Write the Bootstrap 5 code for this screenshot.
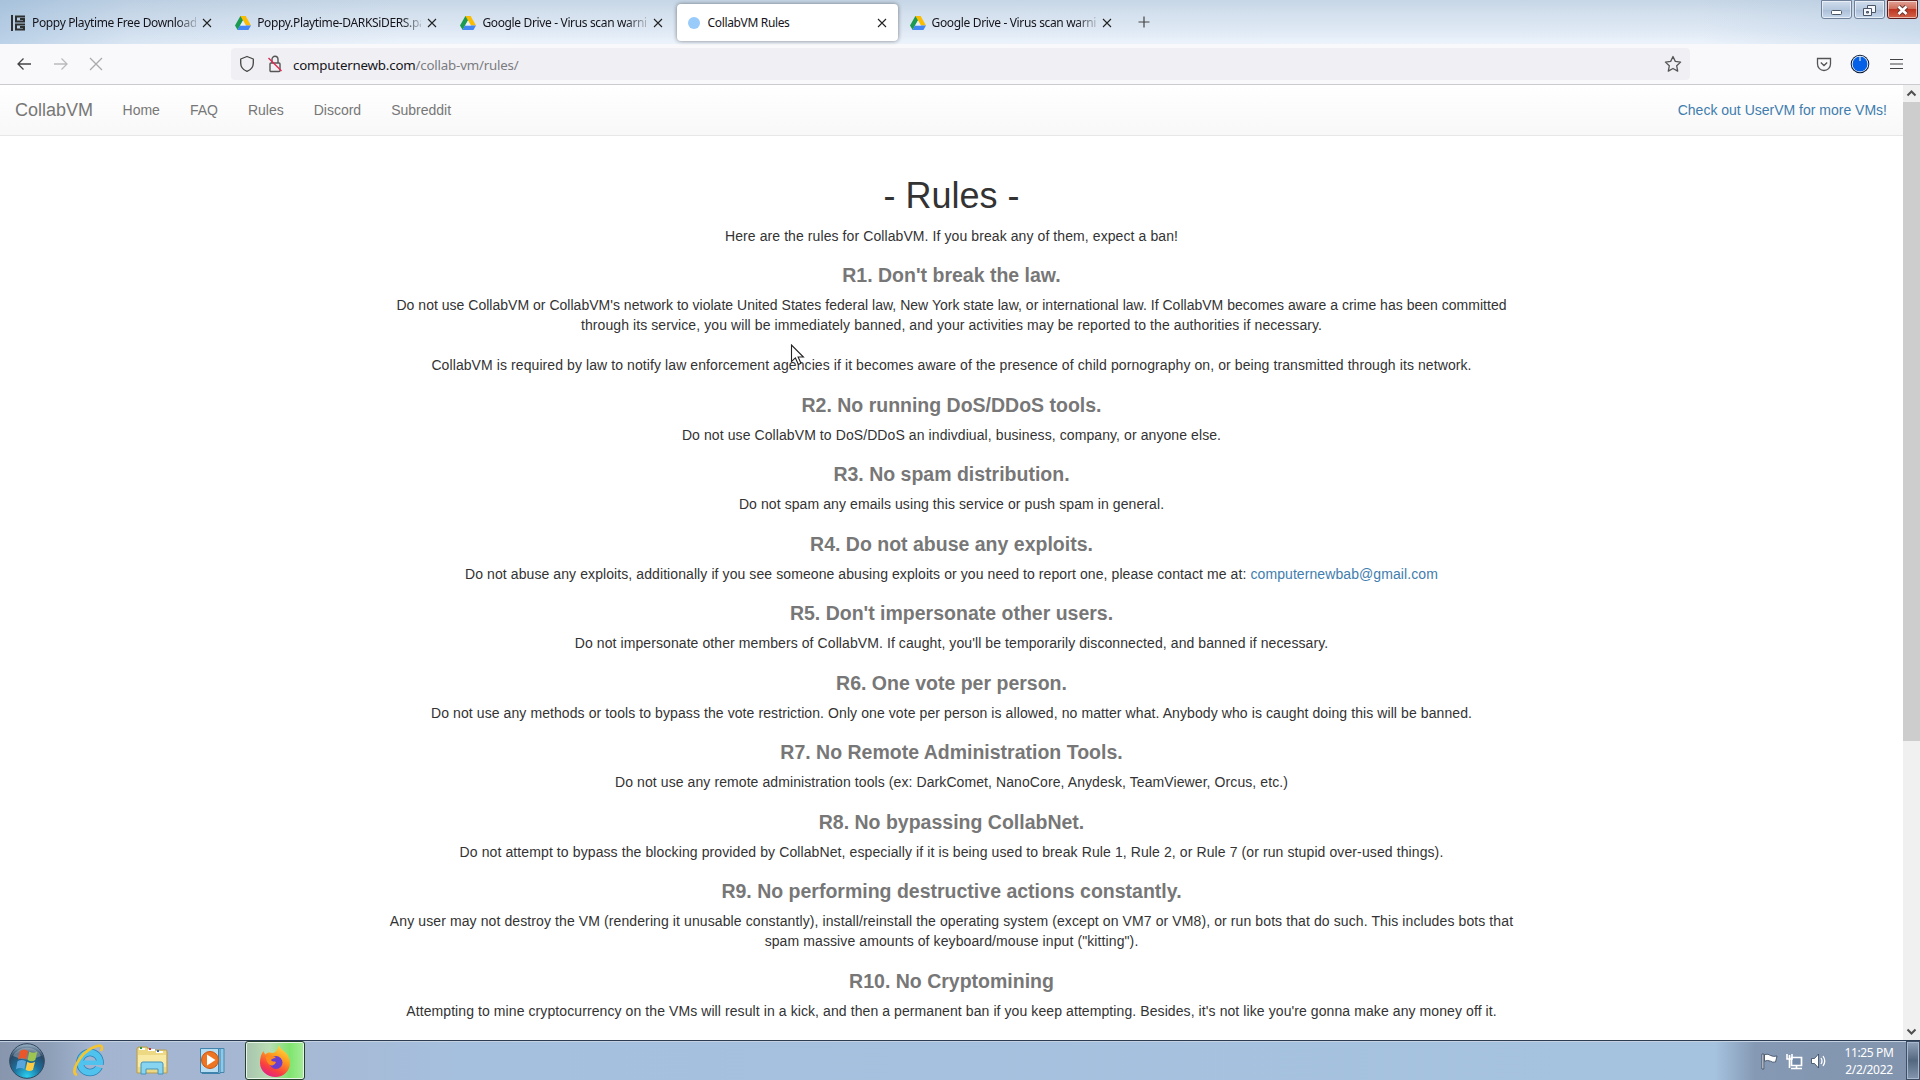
<!DOCTYPE html>
<html lang="en"><head><meta charset="utf-8"><title>CollabVM Rules</title>
<link rel="stylesheet" href="https://cdn.jsdelivr.net/npm/bootstrap@5.3.0/dist/css/bootstrap.min.css">
<script src="https://cdn.jsdelivr.net/npm/bootstrap@5.3.0/dist/js/bootstrap.bundle.min.js" defer></script>
<style>
html,body{height:1080px;overflow:hidden;background:#fff}
.desk{width:1920px;height:1080px;position:relative}
.ui{font-family:"Noto Sans","Open Sans",sans-serif}
.tabstrip{height:44px;position:relative;background:linear-gradient(90deg,#7fa8cf70,#8fb0d030 130px,transparent 400px,transparent 1700px,#8fb0d040),linear-gradient(#c6d6e6,#d5e1ee 35%,#dfe9f5 70%,#ecf3fb);font-size:12px;color:#15141a}
.btab{width:225.2px;height:44px;padding:1px 13px 0 10px;flex:none}
.ttl{width:164px;white-space:nowrap;letter-spacing:-.35px;margin-left:6px}
.fade-r{-webkit-mask-image:linear-gradient(90deg,#000 88%,#0004 99%)}
.btab.on{height:37px;width:221px;margin:4px 2px 0 1px;padding:1px 11px 0 9px;background:#fff;border-radius:4px;box-shadow:0 0 4px #0007}
.dot{width:12px;height:12px;background:#98cbfa;margin:0 2px}
.winbtns{position:absolute;right:2px;top:0}
.wb{width:31px;height:19px;border:1px solid #6f819b;border-radius:0 0 3px 3px;background:linear-gradient(#cfdcec,#b6c8de 50%,#a9bdd6 51%,#c7d8ec);box-shadow:inset 0 0 0 1px #ffffff90;margin-left:2px}
.wb.x{border-color:#5e1d1d;background:linear-gradient(#e0a296,#cf6a57 48%,#bd3520 50%,#d4634a)}
.tools{height:41px;background:#f9f9fb;border-bottom:1px solid #cacad0;padding:0 17px 0 17px}
.urlbar{margin-left:128px;width:1459px;height:32px;background:#f0f0f4;border-radius:4px;font-size:13.3px;color:#15141a;padding:0 8px 0 8px}
.url-text{letter-spacing:-.19px;padding-top:3px}
.url-text span{color:#7b7b80}
.page{font-family:"Liberation Sans",Arial,sans-serif;font-size:14px;line-height:20px;color:#333;height:955px}
.sitebar{height:51px;background:linear-gradient(#fff,#f8f8f8);border-bottom:1px solid #e7e7e7;color:#777;padding:0 16px 0 15px}
.sitebar .brandname{font-size:18px;margin-right:14.5px}
.sitebar .lnk{padding:0 15px}
.page a{color:#3f7dae;text-decoration:none}
.rules{width:1170px;letter-spacing:.088px}
.rules h1{font-size:36px;line-height:40px;margin:39.700px 0 10px;letter-spacing:0}
.rules h4{font-size:19.500px;line-height:20px;font-weight:700;color:#777;margin:19.350px 0 10.200px;letter-spacing:0}
.rules p{margin:0;white-space:nowrap}
.snug{letter-spacing:.018px}
.wide{letter-spacing:.103px}
.sbar{width:17px;background:#f0f0f0}
.thumb{height:639px;background:#cdcdcd}
.taskbar{height:40px;position:relative;border-top:1px solid #2b3c53;box-shadow:inset 0 1px #c5d0e0;background:linear-gradient(90deg,#8796ad 0,#8e9fb8 50px,#a3b4d0 90px,#a6b8d4 300px,#a5c0de 460px,#a5c2df 1715px,#8599b4 1755px,#8294ad 1920px)}
.fxbtn{width:60px;height:39px;border:1px solid #26402e;border-radius:3px;box-shadow:inset 0 0 0 1px #e8f5e8;background:linear-gradient(90deg,#a8c4ae,#b9dcb4 40%,#7fe46f 75%,#a5ec98);margin-left:18px}
.clock{font-size:12px;line-height:17px;color:#fff;width:66px;letter-spacing:-.35px;margin-left:9px}
.peek{width:14px;height:39px;margin-left:4px;border:1px solid #3e4e64;box-shadow:inset 0 0 0 1px #a8b9cf;background:linear-gradient(#91a2b9,#53677f 50%,#8396ad)}
.cur{position:absolute;left:790px;top:344px}
</style></head><body><div class="desk d-flex flex-column">
<svg width="0" height="0" class="position-absolute"><defs>
<symbol id="drive" viewBox="0 0 16 16"><path d="M5.400 1h5.200L8 5.500 2.600 15 0 10.400z" fill="#1b9a50"/><path d="M5.400 1h5.200L16 10.400h-5.200z" fill="#fbbc04"/><path d="M4.900 10.400H16L13.400 15H2.600z" fill="#4285f4"/><path d="M8 5.500 10.900 10.400H5.100z" fill="#e6eff8"/></symbol>
<symbol id="xx" viewBox="0 0 10 10"><path d="M1 1l8 8M9 1l-8 8" stroke="#222" stroke-width="1.100"/></symbol></defs></svg>
<div class="tabstrip ui d-flex">
<div class="btab d-flex align-items-center"><svg width="16" height="16" viewBox="0 0 16 16" fill="none" stroke="#2d302e" stroke-width="2"><path d="M2 0v16M15 1.500H6v5h8V4h-4M15 9.500H6v5h8V12h-4"/></svg><span class="ttl fade-r">Poppy Playtime Free Download</span><svg width="10" height="10" class="ms-auto"><use href="#xx"/></svg></div>
<div class="btab d-flex align-items-center"><svg width="16" height="16"><use href="#drive"/></svg><span class="ttl fade-r">Poppy.Playtime-DARKSiDERS.pa</span><svg width="10" height="10" class="ms-auto"><use href="#xx"/></svg></div>
<div class="btab d-flex align-items-center"><svg width="16" height="16"><use href="#drive"/></svg><span class="ttl fade-r">Google Drive - Virus scan warni</span><svg width="10" height="10" class="ms-auto"><use href="#xx"/></svg></div>
<div class="btab on d-flex align-items-center"><span class="dot rounded-circle"></span><span class="ttl">CollabVM Rules</span><svg width="10" height="10" class="ms-auto"><use href="#xx"/></svg></div>
<div class="btab d-flex align-items-center"><svg width="16" height="16"><use href="#drive"/></svg><span class="ttl fade-r">Google Drive - Virus scan warni</span><svg width="10" height="10" class="ms-auto"><use href="#xx"/></svg></div>
<svg class="align-self-center ms-2 ps-1" width="18" height="14" viewBox="0 0 14 14"><path d="M7 1.500v11M1.500 7h11" stroke="#444" stroke-width="1.200"/></svg>
<div class="winbtns d-flex"><div class="wb"><svg width="29" height="17" class="d-block"><rect x="9.500" y="9.500" width="10" height="4" rx="1" fill="#fff" stroke="#4b5565"/></svg></div><div class="wb"><svg width="29" height="17" class="d-block" fill="#f4f7fb" stroke="#4b5565"><path d="M12.500 4.500h8v7h-8z"/><path d="M8.500 7.500h8v7h-8z"/><path d="M11.500 10.500h2v1.500h-2z" fill="#8496b0"/></svg></div><div class="wb x"><svg width="29" height="17" class="d-block"><path d="M10.500 5.500l8 7.500M18.500 5.500l-8 7.500" stroke="#6b3630" stroke-width="4.500"/><path d="M10.500 5.500l8 7.500M18.500 5.500l-8 7.500" stroke="#fff" stroke-width="2.600"/></svg></div></div>
</div>
<div class="tools ui d-flex align-items-center">
<svg width="86" height="16" fill="none" stroke-width="1.300"><path d="M14 8H1M6.500 2.500L1 8l5.500 5.500" stroke="#444"/><path d="M37 8h13M44.500 2.500L50 8l-5.500 5.500" stroke="#bbb"/><path d="M73 2l12 12M85 2L73 14" stroke="#aaa"/></svg>
<div class="urlbar d-flex align-items-center"><svg width="16" height="18" viewBox="0 0 16 18" fill="none" stroke="#444" stroke-width="1.300"><path d="M8 1.500L14.300 4v4c0 4-2.800 7-6.300 8.400C4.500 15 1.700 12 1.700 8V4z" stroke-linejoin="round"/></svg>
<svg width="16" height="18" viewBox="0 0 16 18" fill="none" stroke="#555" stroke-width="1.400" style="margin-left:12px;margin-right:10px"><rect x="3" y="8" width="10" height="8.500" rx="1"/><path d="M5 8V4.500a3 3.300 0 0 1 6 0V8"/><path d="M1.500 3l13 13" stroke="#e22850"/></svg>
<div class="url-text">computernewb.com<span>/collab-vm/rules/</span></div>
<svg class="ms-auto" width="18" height="18" viewBox="0 0 18 18" fill="none" stroke="#555" stroke-width="1.300" stroke-linejoin="round"><path d="M9 1.500l2.300 4.900 5.300.7-3.900 3.700 1 5.300L9 13.500l-4.700 2.600 1-5.300L1.400 7.100l5.300-.7z"/></svg></div>
<div class="ms-auto d-flex align-items-center"><svg width="16" height="16" viewBox="0 0 16 16" fill="none" stroke="#555" stroke-width="1.300"><path d="M1.500 2.500h13V8a6.500 6.500 0 0 1-13 0zM4.800 6.500L8 9.500l3.200-3"/></svg>
<svg width="20" height="20" style="margin:0 20px 0 18px"><circle cx="10" cy="10" r="9.300" fill="#0a1d3c"/><circle cx="10" cy="10" r="8.300" fill="#fff"/><circle cx="10" cy="10" r="7.500" fill="#0560e8"/><path d="M10 2v5" stroke="#fff"/></svg>
<svg width="13" height="14"><path d="M0 2.500h13M0 7h13M0 11.500h13" stroke="#444" stroke-width="1.200"/></svg></div>
</div>
<div class="page d-flex">
<div class="flex-grow-1 overflow-hidden">
<div class="sitebar d-flex align-items-center"><span class="brandname">CollabVM</span><span class="lnk">Home</span><span class="lnk">FAQ</span><span class="lnk">Rules</span><span class="lnk">Discord</span><span class="lnk">Subreddit</span><a class="ms-auto" href="#">Check out UserVM for more VMs!</a></div>
<div class="rules mx-auto text-center">
<h1>- Rules -</h1><p>Here are the rules for CollabVM. If you break any of them, expect a ban!</p>
<h4>R1. Don't break the law.</h4><p><span class="snug">Do not use CollabVM or CollabVM's network to violate United States federal law, New York state law, or international law. If CollabVM becomes aware a crime has been committed</span><br>through its service, you will be immediately banned, and your activities may be reported to the authorities if necessary.<br><br>CollabVM is required by law to notify law enforcement agencies if it becomes aware of the presence of child pornography on, or being transmitted through its network.</p>
<h4>R2. No running DoS/DDoS tools.</h4><p>Do not use CollabVM to DoS/DDoS an indivdiual, business, company, or anyone else.</p>
<h4>R3. No spam distribution.</h4><p>Do not spam any emails using this service or push spam in general.</p>
<h4>R4. Do not abuse any exploits.</h4><p>Do not abuse any exploits, additionally if you see someone abusing exploits or you need to report one, please contact me at: <a href="#">computernewbab@gmail.com</a></p>
<h4>R5. Don't impersonate other users.</h4><p>Do not impersonate other members of CollabVM. If caught, you'll be temporarily disconnected, and banned if necessary.</p>
<h4>R6. One vote per person.</h4><p>Do not use any methods or tools to bypass the vote restriction. Only one vote per person is allowed, no matter what. Anybody who is caught doing this will be banned.</p>
<h4>R7. No Remote Administration Tools.</h4><p>Do not use any remote administration tools (ex: DarkComet, NanoCore, Anydesk, TeamViewer, Orcus, etc.)</p>
<h4>R8. No bypassing CollabNet.</h4><p class="wide">Do not attempt to bypass the blocking provided by CollabNet, especially if it is being used to break Rule 1, Rule 2, or Rule 7 (or run stupid over-used things).</p>
<h4>R9. No performing destructive actions constantly.</h4><p class="wide">Any user may not destroy the VM (rendering it unusable constantly), install/reinstall the operating system (except on VM7 or VM8), or run bots that do such. This includes bots that<br>spam massive amounts of keyboard/mouse input ("kitting").</p>
<h4>R10. No Cryptomining</h4><p>Attempting to mine cryptocurrency on the VMs will result in a kick, and then a permanent ban if you keep attempting. Besides, it's not like you're gonna make any money off it.</p>
</div></div>
<div class="sbar d-flex flex-column align-items-center"><svg width="17" height="17"><path d="M4.500 10.500l4-4 4 4" fill="none" stroke="#505050" stroke-width="2"/></svg><div class="thumb w-100"></div><svg class="mt-auto" width="17" height="17"><path d="M4.500 6.500l4 4 4-4" fill="none" stroke="#505050" stroke-width="2"/></svg></div>
</div>
<div class="taskbar ui d-flex align-items-center">
<svg width="36" height="38" viewBox="0 0 36 38" style="margin-left:9px"><defs><radialGradient id="orb" cx=".5" cy=".95" r=".9"><stop offset="0" stop-color="#2bd0f0"/><stop offset=".45" stop-color="#1c6f9c"/><stop offset=".8" stop-color="#2a4865"/><stop offset="1" stop-color="#8ea6bb"/></radialGradient></defs><circle cx="18" cy="19" r="17.300" fill="url(#orb)" stroke="#31475e"/><path d="M4 14a15 13 0 0 1 28 0q-14 7-28 0z" fill="#fff" opacity=".28"/><path d="M11 9q4-3 8 0l-1.600 8.500q-4-2.500-8.400 0z" fill="#e8562a"/><path d="M20.300 9.500q4 2.500 8 0l-2 8.500q-3.500 2.500-7.700 0z" fill="#9cc552"/><path d="M8.500 19.300q4-2.700 8.500 0l-1.700 8q-4-2.500-8.300 0z" fill="#5aa5dc"/><path d="M18.300 19.700q3.700 2.500 7.700 0l-2 8q-3.500 2.500-7.400 0z" fill="#fbcb45"/></svg>
<svg width="32" height="36" viewBox="0 0 32 36" style="margin-left:28px"><circle cx="17" cy="19.500" r="10" fill="none" stroke="#2c7fb5" stroke-width="7.600"/><circle cx="17" cy="19.500" r="10" fill="none" stroke="#4fc3ee" stroke-width="6"/><path d="M19 22h13v4z" fill="#a4b5d0"/><path d="M9 17.500h20.500V22H9z" fill="#4fc3ee"/><path d="M4 32C-4 30 8 10 19 5c8-4 12-3 9 3" fill="none" stroke="#f5c431" stroke-width="2.700"/></svg>
<svg width="32" height="32" viewBox="0 0 32 32" style="margin-left:31px"><path d="M1 4q0-2 2-2h8l2 3h17q1 0 1 2v21H1z" fill="#edd883" stroke="#b89b4d"/><path d="M3 4h6M12 5h7M20 7h7" stroke="#fff" stroke-width="2"/><path d="M4 3h2" stroke="#2a9b44" stroke-width="2"/><path d="M13 4h2" stroke="#c33" stroke-width="2"/><path d="M21 6h2" stroke="#36a" stroke-width="2"/><path d="M2 10h28v12H2z" fill="#f8e9a4"/><path d="M5 29V19q0-2 2-2h18q2 0 2 2v10h-5v-5H10v5z" fill="#86d4ef" stroke="#4594bd"/></svg>
<svg width="28" height="30" viewBox="0 0 28 30" style="margin-left:31px"><path d="M5 2.500h20v24H5z" fill="#8fc8e8" stroke="#4488b0"/><path d="M3 2.500h18v25H3z" fill="#9fd0ec" stroke="#3f82ac"/><path d="M1.500 2.500h18v24h-18z" fill="#b7ddf2" stroke="#3f82ac"/><circle cx="11" cy="14" r="8.500" fill="#ee7623" stroke="#c95512"/><path d="M8 8.500l8.500 5.500L8 19.500z" fill="#fff"/></svg>
<div class="fxbtn d-flex align-items-center justify-content-center"><svg width="32" height="34" viewBox="0 0 32 34"><defs><linearGradient id="fx" x1=".8" y1="0" x2=".3" y2="1"><stop offset="0" stop-color="#ffe143"/><stop offset=".4" stop-color="#ff9a1f"/><stop offset=".75" stop-color="#f9403f"/><stop offset="1" stop-color="#e0208a"/></linearGradient></defs><path d="M20 1c1 4 4 5 7 8 2 2 4 6 4 10 0 8-6.500 14-14.500 14S1 27 1 19c0-5 1-9 3.500-12 .5 1.500 1 2.500 2 3.500C8 8 11 8 14 9c3-1 5-4 6-8z" fill="url(#fx)"/><circle cx="17" cy="18.500" r="6.500" fill="#6a3fd0"/><path d="M7 13c4-3 8-1 10 1-3 0-4 1-5 2 1 2 3 1 5 2-1 3-4 4-6 3-3-2-4-5-4-8z" fill="#ff8a1e"/></svg></div>
<div class="d-flex align-items-center ms-auto"><svg width="66" height="18" viewBox="0 0 66 18" fill="#fff" stroke="#33445a" stroke-width=".8"><path d="M1 2h1.800v15H1z"/><path d="M3.500 2.500q4-1 6 1 3 1.500 6.500.5l-1.500 6q-3 .7-5-.8-3-1.500-6 0z"/><path d="M30.500 5.500h10v8h-10z" fill="#7289a8" stroke="#fff" stroke-width="1.700"/><path d="M30 16.500h11M35.500 14v2.500M28.500 3v13M26 2v5h5V2" fill="none" stroke="#fff" stroke-width="1.600"/><path d="M50.500 6.500h3l4-4.500v14l-4-4.500h-3z"/><path d="M60 6q2 3 0 6M62 4q3.500 5 0 10" fill="none" stroke="#fff" stroke-width="1.300"/></svg>
<div class="clock text-center"><div>11:25 PM</div><div>2/2/2022</div></div>
<div class="peek"></div></div>
</div>
<svg class="cur" width="16" height="24" viewBox="0 0 16 24"><path d="M1.500 1v16.500l3.900-3.600 3 6.600 2.600-1.200-2.900-6.300h5.300z" fill="#fff" stroke="#222" stroke-width="1.100"/></svg>
</div></body></html>
